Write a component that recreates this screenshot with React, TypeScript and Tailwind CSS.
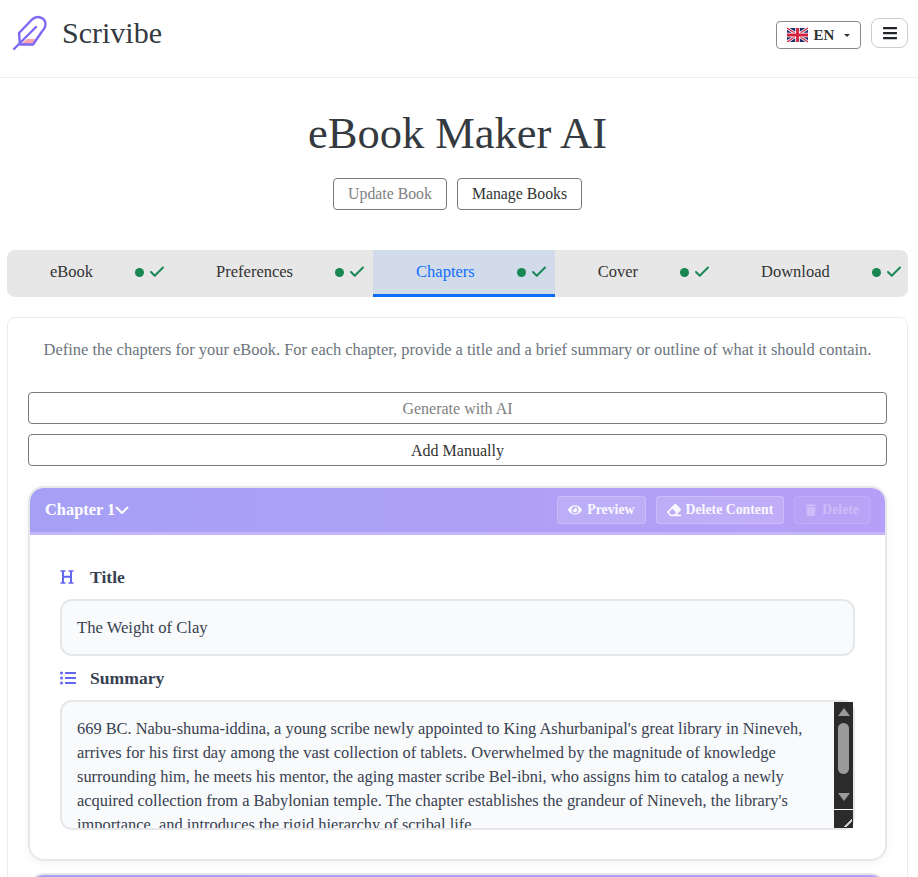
import React from 'react';
import { Check } from 'lucide-react';
import { FaBars, FaEraser, FaEye, FaListUl, FaTrash } from 'react-icons/fa';

const tabs = [
  { label: 'eBook' },
  { label: 'Preferences' },
  { label: 'Chapters', active: true },
  { label: 'Cover' },
  { label: 'Download' },
];

function Logo() {
  return (
    <svg width="40" height="40" viewBox="12 12 40 40" fill="none" className="shrink-0">
      <path d="M21 43 L27 38 L36 38 L33 43 Z" fill="#fda4af" />
      <path
        d="M19 32 L32 18.5 C37 14 46 16 45.5 24 C45 27 44 28.5 42 30.5 L33 43.5 L20 43.5 Z"
        stroke="#7c6af5"
        strokeWidth="2.4"
        strokeLinejoin="round"
      />
      <path d="M14 48 L36 26" stroke="#7c6af5" strokeWidth="2.4" strokeLinecap="round" />
    </svg>
  );
}

function Flag() {
  return (
    <svg width="21" height="16" viewBox="0 0 60 40" className="shrink-0">
      <rect width="60" height="40" fill="#1f2f6b" />
      <path d="M0 0 L60 40 M60 0 L0 40" stroke="#fff" strokeWidth="8" />
      <path d="M0 0 L60 40 M60 0 L0 40" stroke="#d3213f" strokeWidth="3" />
      <path d="M30 0 V40 M0 20 H60" stroke="#fff" strokeWidth="13" />
      <path d="M30 0 V40 M0 20 H60" stroke="#d3213f" strokeWidth="8" />
    </svg>
  );
}

function HeadingIcon() {
  return (
    <svg width="14" height="14" viewBox="0 0 14 14" fill="none" stroke="#6366f1" strokeWidth="2" className="shrink-0">
      <path d="M3 1 V13 M11 1 V13 M3 6.8 H11" />
      <path d="M0.5 1 H5.5 M8.5 1 H13.5 M0.5 13 H5.5 M8.5 13 H13.5" strokeWidth="1.5" />
    </svg>
  );
}

function HeaderButton({ icon, label, disabled }: { icon: React.ReactNode; label: string; disabled?: boolean }) {
  return (
    <button
      className={`flex h-[28px] items-center gap-[5px] rounded-[4px] border px-[10px] text-[13.8px] font-bold ${
        disabled ? 'border-white/10 bg-white/5 text-white/30' : 'border-white/20 bg-white/15 text-white/90'
      }`}
    >
      {icon}
      {label}
    </button>
  );
}

export default function App() {
  return (
    <div className="h-[877px] w-[918px] overflow-hidden bg-white font-['Liberation_Serif',serif] text-[#333333]">
      <header className="flex h-[78px] items-start justify-between border-b border-[#eeeeee] pl-[12px] pr-[10px]">
        <div className="flex items-center gap-[10px] pt-[13px]">
          <Logo />
          <span className="text-[30px] leading-[40px] text-[#343a40]">Scrivibe</span>
        </div>
        <div className="flex items-start gap-[10px] pt-[18px]">
          <button className="mt-[3px] flex h-[28px] w-[85px] items-center justify-center gap-[6px] rounded-[4px] border border-[#8a8a8a] text-[15px] font-bold">
            <Flag />
            EN
            <span className="ml-[4px] h-0 w-0 border-x-[3px] border-t-[3px] border-x-transparent border-t-[#333]" />
          </button>
          <button className="flex h-[30px] w-[37px] items-center justify-center rounded-[8px] border border-[#cccccc] text-[#212529]">
            <FaBars size={16} />
          </button>
        </div>
      </header>

      <h1 className="mt-[28px] pr-[3px] text-center text-[44.5px] leading-[55px] text-[#343a40]">eBook Maker AI</h1>

      <div className="mr-[3px] mt-[17px] flex justify-center gap-[10px] text-[15.8px]">
        <button className="h-[32px] w-[114px] rounded-[4px] border border-[#7a7a7a] text-[#808080]">Update Book</button>
        <button className="h-[32px] w-[125px] rounded-[4px] border border-[#7a7a7a] text-[#333333]">Manage Books</button>
      </div>

      <nav className="ml-[7px] mr-[10px] mt-[40px] flex h-[47px] justify-between overflow-hidden rounded-[8px] bg-[#e7e7e7] text-[16.5px]">
        {tabs.map((t) => (
          <div
            key={t.label}
            className={`flex items-center pl-[43px] pr-[7px] ${
              t.active ? 'border-b-[3px] border-[#0d6efd] bg-[#d2dbea] text-[#0d6efd]' : 'pb-[3px] text-[#333333]'
            }`}
          >
            <span>{t.label}</span>
            <span className="ml-[42px] h-[9px] w-[9px] rounded-full bg-[#198754]" />
            <Check size={18} strokeWidth={2.6} className="ml-[4px] text-[#198754]" />
          </div>
        ))}
      </nav>

      <section className="ml-[7px] mr-[10px] mt-[20px] rounded-t-[8px] border border-[#e9ecef] px-[20px] pt-[21px]">
        <p className="whitespace-nowrap text-center text-[16.45px] leading-[22px] text-[#6c757d]">
          Define the chapters for your eBook. For each chapter, provide a title and a brief summary or outline of what it should contain.
        </p>

        <button className="mt-[31px] block h-[32px] w-full rounded-[4px] border border-[#7a7a7a] pt-[1px] text-[16px] text-[#808080]">
          Generate with AI
        </button>
        <button className="mt-[10px] block h-[32px] w-full rounded-[4px] border border-[#7a7a7a] pt-[1px] text-[16px] text-[#333333]">
          Add Manually
        </button>

        <article className="mt-[20px] overflow-hidden rounded-[16px] border-2 border-[#e5e7eb] shadow-[0_2px_8px_rgba(0,0,0,0.05)]">
          <div className="flex h-[47px] items-center justify-between border-b-[3px] border-[#c4b5fd] bg-gradient-to-r from-[#a5a0f6] to-[#b69ff6] pl-[15px] pr-[15px]">
            <div className="flex items-center text-[16.4px] font-bold text-white">
              Chapter 1
              <svg width="14" height="8" viewBox="0 0 14 8" fill="none" stroke="white" strokeWidth="2">
                <path d="M1 1 L7 7 L13 1" />
              </svg>
            </div>
            <div className="flex gap-[10px]">
              <HeaderButton icon={<FaEye size={14} />} label="Preview" />
              <HeaderButton icon={<FaEraser size={14} />} label="Delete Content" />
              <HeaderButton icon={<FaTrash size={12} />} label="Delete" disabled />
            </div>
          </div>

          <div className="h-[324px] px-[30px] pt-[32px]">
            <label className="flex items-center gap-[16px] text-[17.6px] font-bold leading-[20px] text-[#374151]">
              <HeadingIcon />
              Title
            </label>
            <div className="mt-[12px] flex h-[57px] items-center rounded-[12px] border-2 border-[#e5e7eb] bg-[#f9fafb] px-[15px] pt-[2px] text-[16.6px] text-[#374151]">
              The Weight of Clay
            </div>
            <label className="mt-[12px] flex items-center gap-[14px] text-[17.6px] font-bold leading-[20px] text-[#374151]">
              <FaListUl size={16} className="text-[#6366f1]" />
              Summary
            </label>
            <div className="mt-[12px] flex h-[130px] rounded-[12px] border-2 border-[#e5e7eb] bg-[#f9fafb]">
              <div className="min-w-0 flex-1 overflow-hidden rounded-bl-[10px] pl-[15px] pr-[14px] pt-[15px] text-[16.4px] leading-[24px] text-[#374151]">
                669 BC. Nabu-shuma-iddina, a young scribe newly appointed to King Ashurbanipal's great library in Nineveh,
                arrives for his first day among the vast collection of tablets. Overwhelmed by the magnitude of knowledge
                surrounding him, he meets his mentor, the aging master scribe Bel-ibni, who assigns him to catalog a newly
                acquired collection from a Babylonian temple. The chapter establishes the grandeur of Nineveh, the library's
                importance, and introduces the rigid hierarchy of scribal life.
              </div>
              <div className="flex w-[19px] shrink-0 flex-col">
                <div className="flex h-[107px] flex-col items-center bg-[#2b2b2b] pt-[6px]">
                  <span className="h-0 w-0 border-x-[6px] border-b-[8px] border-x-transparent border-b-[#9a9a9a]" />
                  <span className="mt-[7px] h-[51px] w-[11px] rounded-full bg-[#9a9a9a]" />
                  <span className="mt-[19px] h-0 w-0 border-x-[6px] border-t-[8px] border-x-transparent border-t-[#9a9a9a]" />
                </div>
                <div className="mt-[1px] flex flex-1 items-end justify-end bg-[#2b2b2b] pb-[1px] pr-[1px]">
                  <span className="h-[8px] w-[8px] bg-[linear-gradient(135deg,transparent_45%,#cccccc_45%,#cccccc_65%,transparent_65%)]" />
                </div>
              </div>
            </div>
          </div>
        </article>

        <div className="mt-[12px] h-[40px] rounded-t-[16px] border-2 border-[#e5e7eb] bg-gradient-to-r from-[#a5a0f6] to-[#b69ff6]" />
      </section>
    </div>
  );
}
